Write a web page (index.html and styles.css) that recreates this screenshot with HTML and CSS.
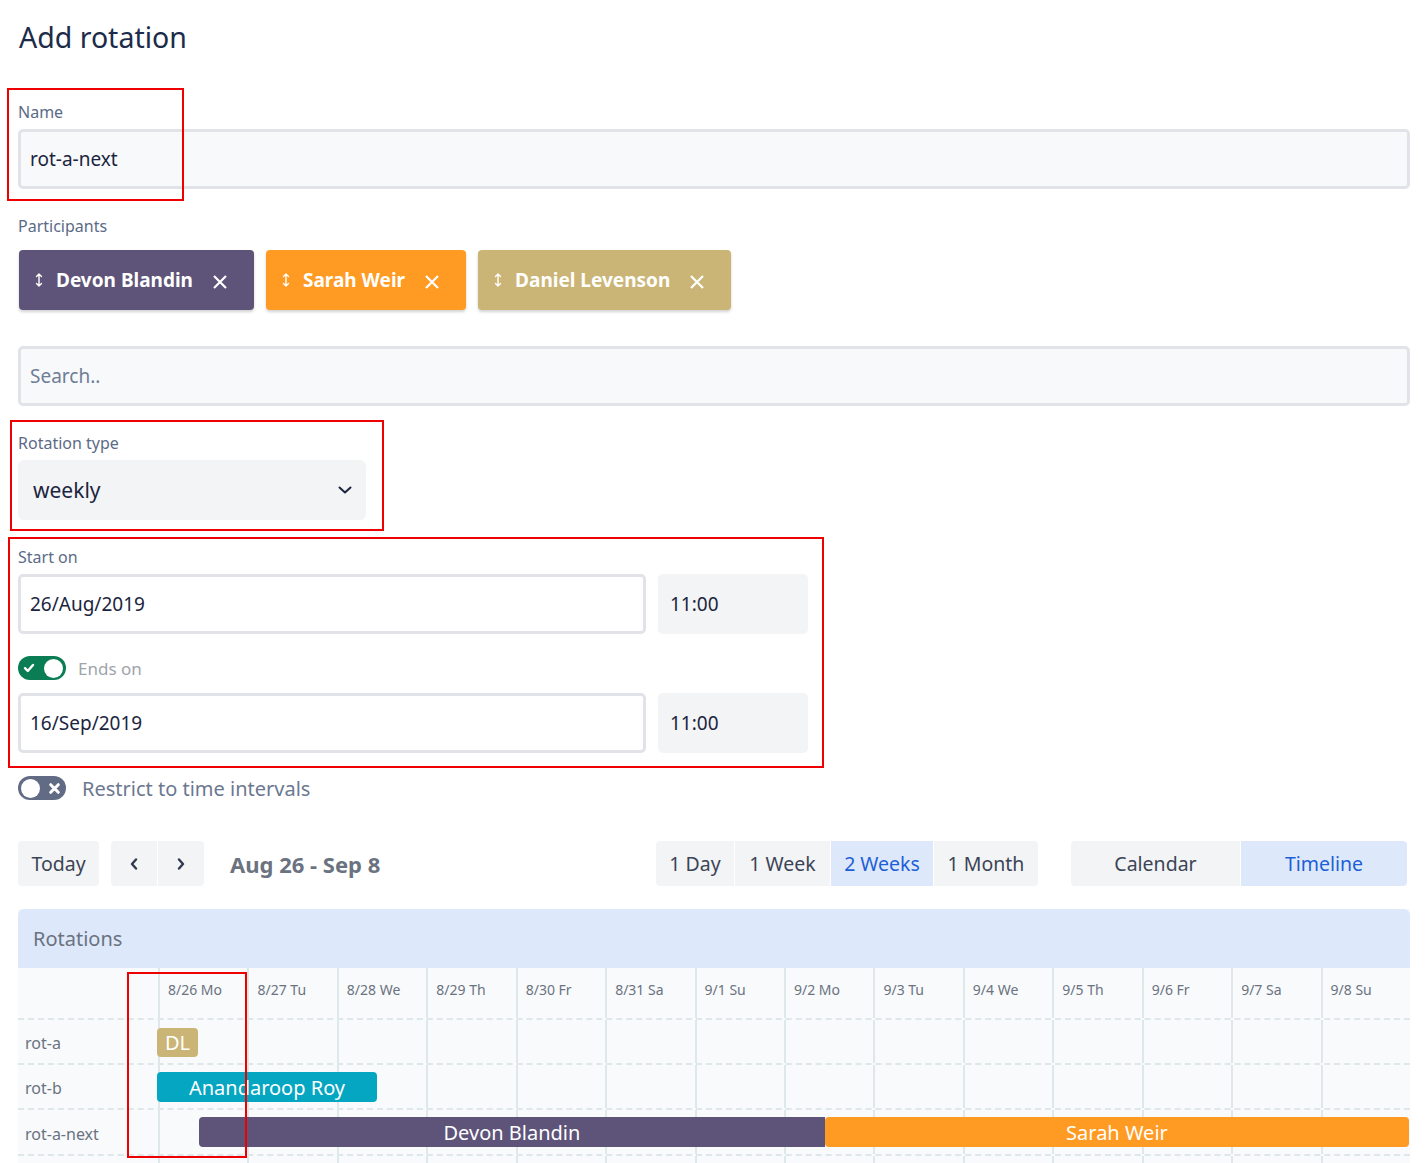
FILE: index.html
```html
<!DOCTYPE html>
<html>
<head>
<meta charset="utf-8">
<title>Add rotation</title>
<link rel="stylesheet" href="styles.css">
</head>
<body>
<div class="page">
  <h1 class="title">Add rotation</h1>

  <div class="field field-name">
    <div class="label">Name</div>
    <div class="input input-bordered">rot-a-next</div>
  </div>

  <div class="field field-participants">
    <div class="label">Participants</div>
    <div class="chips">
      <div class="chip chip-purple">
        <svg class="chip-drag" viewBox="0 0 10 16"><path d="M5 2 V14 M2.5 4.5 L5 2 L7.5 4.5 M2.5 11.5 L5 14 L7.5 11.5"/></svg>
        <span class="chip-name">Devon Blandin</span>
        <svg class="chip-x" viewBox="0 0 16 16"><path d="M2 2 L14 14 M14 2 L2 14"/></svg>
      </div>
      <div class="chip chip-orange">
        <svg class="chip-drag" viewBox="0 0 10 16"><path d="M5 2 V14 M2.5 4.5 L5 2 L7.5 4.5 M2.5 11.5 L5 14 L7.5 11.5"/></svg>
        <span class="chip-name">Sarah Weir</span>
        <svg class="chip-x" viewBox="0 0 16 16"><path d="M2 2 L14 14 M14 2 L2 14"/></svg>
      </div>
      <div class="chip chip-tan">
        <svg class="chip-drag" viewBox="0 0 10 16"><path d="M5 2 V14 M2.5 4.5 L5 2 L7.5 4.5 M2.5 11.5 L5 14 L7.5 11.5"/></svg>
        <span class="chip-name">Daniel Levenson</span>
        <svg class="chip-x" viewBox="0 0 16 16"><path d="M2 2 L14 14 M14 2 L2 14"/></svg>
      </div>
    </div>
  </div>

  <div class="input input-bordered input-search">Search..</div>

  <div class="field field-rotation">
    <div class="label">Rotation type</div>
    <div class="select">
      <span>weekly</span>
      <svg class="select-chevron" viewBox="0 0 14 8"><path d="M1.5 1.5 L7 6.5 L12.5 1.5"/></svg>
    </div>
  </div>

  <div class="field field-start">
    <div class="label">Start on</div>
    <div class="date-row">
      <div class="input input-bordered input-date">26/Aug/2019</div>
      <div class="input input-time">11:00</div>
    </div>
    <div class="toggle-row toggle-row-ends">
      <span class="toggle toggle-on">
        <svg class="toggle-icon" viewBox="0 0 12 12"><path d="M2 6.2 L4.8 9 L10 3"/></svg>
        <span class="toggle-knob"></span>
      </span>
      <span class="toggle-label toggle-label-muted">Ends on</span>
    </div>
    <div class="date-row date-row-end">
      <div class="input input-bordered input-date">16/Sep/2019</div>
      <div class="input input-time">11:00</div>
    </div>
  </div>

  <div class="toggle-row toggle-row-restrict">
    <span class="toggle toggle-off">
      <span class="toggle-knob"></span>
      <svg class="toggle-icon" viewBox="0 0 12 12"><path d="M2.5 2.5 L9.5 9.5 M9.5 2.5 L2.5 9.5"/></svg>
    </span>
    <span class="toggle-label">Restrict to time intervals</span>
  </div>

  <div class="toolbar">
    <div class="btn btn-today">Today</div>
    <div class="btn-group btn-nav">
      <div class="btn btn-icon"><svg viewBox="0 0 8 12"><path d="M6 1.5 L2 6 L6 10.5"/></svg></div>
      <div class="btn btn-icon"><svg viewBox="0 0 8 12"><path d="M2 1.5 L6 6 L2 10.5"/></svg></div>
    </div>
    <div class="range">Aug 26 - Sep 8</div>
    <div class="btn-group btn-views">
      <div class="btn btn-day">1 Day</div>
      <div class="btn btn-week">1 Week</div>
      <div class="btn btn-2week btn-active">2 Weeks</div>
      <div class="btn btn-month">1 Month</div>
    </div>
    <div class="btn-group btn-modes">
      <div class="btn btn-mode">Calendar</div>
      <div class="btn btn-mode btn-active">Timeline</div>
    </div>
  </div>

  <div class="panel">
    <div class="panel-header">Rotations</div>
    <div class="tl-row tl-head">
      <div class="tl-label"></div>
      <div class="tl-track">
        <div class="tl-day">8/26 Mo</div><div class="tl-day">8/27 Tu</div><div class="tl-day">8/28 We</div><div class="tl-day">8/29 Th</div><div class="tl-day">8/30 Fr</div><div class="tl-day">8/31 Sa</div><div class="tl-day">9/1 Su</div><div class="tl-day">9/2 Mo</div><div class="tl-day">9/3 Tu</div><div class="tl-day">9/4 We</div><div class="tl-day">9/5 Th</div><div class="tl-day">9/6 Fr</div><div class="tl-day">9/7 Sa</div><div class="tl-day">9/8 Su</div>
      </div>
    </div>
    <div class="tl-row tl-row-a">
      <div class="tl-label">rot-a</div>
      <div class="tl-track">
        <div class="tl-day"></div><div class="tl-day"></div><div class="tl-day"></div><div class="tl-day"></div><div class="tl-day"></div><div class="tl-day"></div><div class="tl-day"></div><div class="tl-day"></div><div class="tl-day"></div><div class="tl-day"></div><div class="tl-day"></div><div class="tl-day"></div><div class="tl-day"></div><div class="tl-day"></div>
        <div class="bar bar-tan bar-badge" style="left:-0.08%">DL</div>
      </div>
    </div>
    <div class="tl-row tl-row-b">
      <div class="tl-label">rot-b</div>
      <div class="tl-track">
        <div class="tl-day"></div><div class="tl-day"></div><div class="tl-day"></div><div class="tl-day"></div><div class="tl-day"></div><div class="tl-day"></div><div class="tl-day"></div><div class="tl-day"></div><div class="tl-day"></div><div class="tl-day"></div><div class="tl-day"></div><div class="tl-day"></div><div class="tl-day"></div><div class="tl-day"></div>
        <div class="bar bar-teal" style="left:-0.08%;width:17.57%">Anandaroop Roy</div>
      </div>
    </div>
    <div class="tl-row tl-row-c">
      <div class="tl-label">rot-a-next</div>
      <div class="tl-track">
        <div class="tl-day"></div><div class="tl-day"></div><div class="tl-day"></div><div class="tl-day"></div><div class="tl-day"></div><div class="tl-day"></div><div class="tl-day"></div><div class="tl-day"></div><div class="tl-day"></div><div class="tl-day"></div><div class="tl-day"></div><div class="tl-day"></div><div class="tl-day"></div><div class="tl-day"></div>
        <div class="bar bar-purple" style="left:3.27%;width:50%">Devon Blandin</div>
        <div class="bar bar-orange" style="left:53.27%;width:46.65%">Sarah Weir</div>
      </div>
    </div>
    <div class="tl-row tl-row-empty">
      <div class="tl-label"></div>
      <div class="tl-track">
        <div class="tl-day"></div><div class="tl-day"></div><div class="tl-day"></div><div class="tl-day"></div><div class="tl-day"></div><div class="tl-day"></div><div class="tl-day"></div><div class="tl-day"></div><div class="tl-day"></div><div class="tl-day"></div><div class="tl-day"></div><div class="tl-day"></div><div class="tl-day"></div><div class="tl-day"></div>
      </div>
    </div>
  </div>
</div>

<div class="annot annot-name"></div>
<div class="annot annot-type"></div>
<div class="annot annot-dates"></div>
<div class="annot annot-day"></div>
</body>
</html>
```

FILE: styles.css
```css
* { box-sizing: border-box; }
html, body { margin: 0; padding: 0; background: #ffffff; }
body {
  font-family: "Noto Sans", "Open Sans", sans-serif;
  color: #1b2540;
  position: relative;
  width: 1425px;
  overflow: hidden;
}
.page { padding: 0 15px 40px 18px; }

.title {
  margin: 19px 0 0 1px;
  font-size: 28.5px;
  line-height: 36px;
  font-weight: 400;
  color: #1c2b4a;
}

.label {
  font-size: 16px;
  line-height: 20px;
  color: #5b6b87;
  margin-bottom: 7px;
}

.field-name { margin-top: 47px; }

.input {
  height: 60px;
  display: flex;
  align-items: center;
  font-size: 19px;
  color: #1b2540;
  border-radius: 5px;
  white-space: nowrap;
}
.input-bordered {
  border: 3px solid #e1e3e8;
  background: #f8f9fb;
  padding: 0 9px;
}

.field-participants { margin-top: 27px; }
.field-participants .label { margin-bottom: 14px; }
.chips { display: flex; gap: 12px; padding-left: 1px; }
.chip {
  height: 60px;
  display: flex;
  align-items: center;
  padding: 0 26px 0 15px;
  border-radius: 4px;
  color: #ffffff;
  font-weight: 700;
  font-size: 19px;
  white-space: nowrap;
  box-shadow: 0 2px 3px rgba(0, 0, 0, 0.18);
}
.chip-purple { background: #5e547a; }
.chip-orange { background: #ff9a22; }
.chip-tan { background: #cbb576; }
.chip-drag { width: 10px; height: 16px; margin-right: 12px; }
.chip-drag path { fill: none; stroke: #ffffff; stroke-width: 1.4; stroke-linecap: round; stroke-linejoin: round; }
.chip-x { width: 16px; height: 16px; margin-left: 19px; margin-top: 3px; }
.chip-x path { fill: none; stroke: #ffffff; stroke-width: 2.2; }

.input-search { margin-top: 36px; color: #6f7d96; }

.field-rotation { margin-top: 27px; }
.select {
  width: 348px;
  height: 60px;
  background: #f3f4f6;
  border-radius: 6px;
  display: flex;
  align-items: center;
  justify-content: space-between;
  padding: 0 14px 0 15px;
  font-size: 21px;
  color: #1b2540;
}
.select-chevron { width: 14px; height: 8px; }
.select-chevron path { fill: none; stroke: #1b2540; stroke-width: 2; stroke-linecap: round; stroke-linejoin: round; }

.field-start { margin-top: 27px; }
.date-row { display: flex; gap: 12px; }
.input-date { width: 628px; background: #ffffff; }
.input-time {
  width: 150px;
  background: #f3f4f6;
  padding-left: 12px;
  border-radius: 5px;
}
.date-row-end { margin-top: 13px; }

.toggle-row { display: flex; align-items: center; height: 24px; }
.toggle-row-ends { margin-top: 22px; }
.toggle-row-restrict { margin-top: 23px; }
.toggle {
  width: 48px;
  height: 24px;
  border-radius: 12px;
  display: flex;
  align-items: center;
  justify-content: space-between;
  padding: 0 3px 0 4px;
  flex: none;
}
.toggle-on { background: #0a7d55; }
.toggle-off { background: #616c84; padding: 0 5px 0 3px; }
.toggle-knob { width: 19px; height: 19px; border-radius: 50%; background: #ffffff; }
.toggle-icon { width: 12px; height: 12px; }
.toggle-on .toggle-icon { margin-left: 1px; }
.toggle-icon path { fill: none; stroke: #ffffff; stroke-width: 2.4; stroke-linecap: round; stroke-linejoin: round; }
.toggle-off .toggle-icon { width: 13px; height: 13px; }
.toggle-off .toggle-icon path { stroke-width: 2.8; }
.toggle-label { font-size: 20px; color: #6b7890; margin-left: 16px; }
.toggle-label-muted { font-size: 17px; color: #a0a4ab; margin-left: 12px; }

.toolbar {
  margin-top: 41px;
  display: flex;
  align-items: center;
  height: 45px;
}
.btn {
  height: 45px;
  display: flex;
  align-items: center;
  justify-content: center;
  background: #f3f4f6;
  color: #3b4455;
  font-size: 19.5px;
  padding: 0;
  white-space: nowrap;
  flex: none;
}
.btn-active { background: #dde9fb; color: #1d5fd6; }
.btn-today { border-radius: 4px; width: 81px; }
.btn-group { display: flex; gap: 1px; border-radius: 4px; overflow: hidden; flex: none; }
.btn-nav { margin-left: 12px; }
.btn-icon { width: 46px; }
.btn-icon svg { width: 8px; height: 12px; }
.btn-icon path { fill: none; stroke: #2f3a4f; stroke-width: 2.4; stroke-linecap: round; stroke-linejoin: round; }
.range {
  flex: 1;
  margin-left: 26px;
  font-size: 22px;
  font-weight: 700;
  color: #6b7280;
  white-space: nowrap;
}
.btn-day { width: 78px; }
.btn-week { width: 95px; }
.btn-2week { width: 102px; }
.btn-month { width: 104px; }
.btn-modes { margin-left: 33px; margin-right: 3px; }
.btn-mode { width: 169px; }
.btn-mode.btn-active { width: 166px; }

.panel { margin-top: 23px; background: #f8fafc; }
.panel-header {
  height: 59px;
  background: #dde9fb;
  border-radius: 6px 6px 0 0;
  display: flex;
  align-items: center;
  padding-left: 15px;
  font-size: 20px;
  color: #6b7280;
}
.tl-row {
  display: flex;
  border-bottom: 2px dashed #dfe8e9;
  height: 45px;
}
.tl-head { height: 52px; }
.tl-row-c { height: 46px; }
.tl-row-empty { border-bottom: none; height: 30px; }
.tl-label {
  width: 140px;
  flex: none;
  display: flex;
  align-items: center;
  padding: 3px 0 0 7px;
  font-size: 16px;
  color: #6b7280;
}
.tl-track {
  flex: 1;
  position: relative;
  display: grid;
  grid-template-columns: repeat(14, 1fr);
}
.tl-day {
  border-left: 2px solid #dfe8e9;
  font-size: 14px;
  color: #6b7280;
  padding: 12px 0 0 8px;
  white-space: nowrap;
}
.bar {
  position: absolute;
  top: 7px;
  height: 30px;
  border-radius: 4px;
  color: #ffffff;
  font-size: 20px;
  display: flex;
  align-items: center;
  justify-content: center;
  white-space: nowrap;
}
.bar-badge { padding: 0 8px; top: 8px; height: 29px; }
.bar-tan { background: #cbb576; }
.bar-teal { background: #05a6c1; }
.bar-purple { background: #5e547a; border-radius: 4px 0 0 4px; }
.bar-orange { background: #ff9a22; border-radius: 4px; }

.annot {
  position: absolute;
  border: 2px solid #ee0000;
  pointer-events: none;
}
.annot-name { left: 7px; top: 88px; width: 177px; height: 113px; }
.annot-type { left: 10px; top: 420px; width: 374px; height: 111px; }
.annot-dates { left: 8px; top: 537px; width: 816px; height: 231px; }
.annot-day { left: 127px; top: 972px; width: 120px; height: 186px; }
```
